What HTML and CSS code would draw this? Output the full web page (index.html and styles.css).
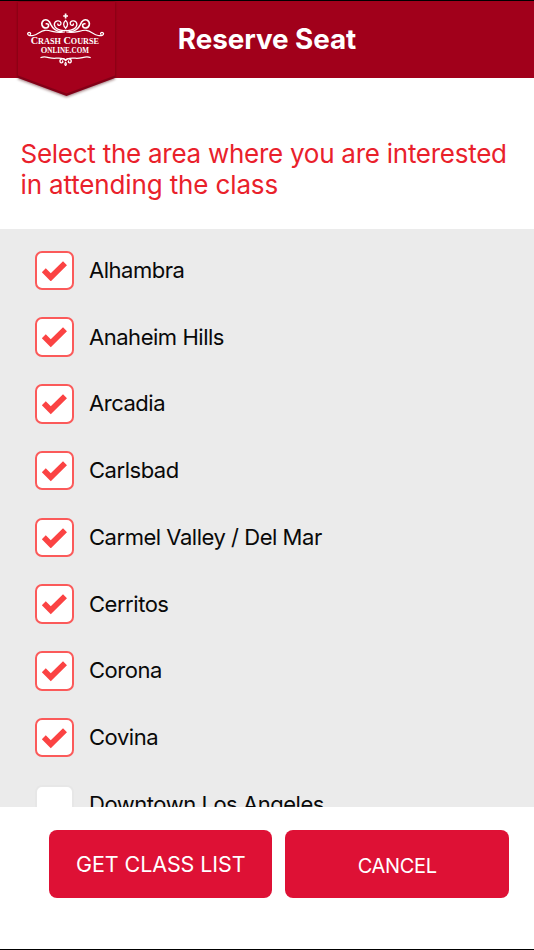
FILE: index.html
```html
<!DOCTYPE html>
<html lang="en">
<head>
<meta charset="utf-8">
<title>Reserve Seat</title>
<link rel="stylesheet" href="styles.css">
</head>
<body>
<svg class="defs" aria-hidden="true">
  <symbol id="check" viewBox="0 0 26 20"><path d="M0.8 10.8 4.6 7 9.4 11.8 21.2 0.2 25 4 9.4 19.6Z"/></symbol>
</svg>
<div class="app">
  <header class="header">
    <svg class="logo" viewBox="0 0 134 110">
      <defs>
        <filter id="shadow" x="-20%" y="-20%" width="140%" height="140%"><feGaussianBlur stdDeviation="1.8"/></filter>
        <g id="scroll" fill="none" stroke="#fff" stroke-linecap="round">
          <path stroke-width="1.300" d="M65.300 30.500C59.500 31 54.500 28.500 54.300 24.500C54.300 20.500 60.300 19.500 61 23C61.200 26 57.600 26 57.800 24"/>
          <path stroke-width="1.600" d="M62 31.500C55 32 52.500 28 50.800 24.500C49.500 20.500 46.500 18.800 43.700 20.300C40.500 22.500 41.500 28 46 28C49.500 27.500 49.300 23.200 46.300 23.800"/>
          <path stroke-width="1.200" d="M64.500 32C56 34 51 29.800 45 30.300C40 30.800 38 34.500 33 35.500C29.500 36.300 26.500 34.500 28 33C29.500 31.600 31.500 33.200 30.300 34.300"/>
          <path stroke-width="1.300" d="M65.600 20.500C63 22.500 63 26 65.600 28"/>
          <path stroke-width="1.300" d="M41 57.500C46 55.500 50 59 56 58.200C61 57.800 64.500 58 65.500 60.500"/>
          <path stroke-width="1.300" d="M65.500 60C63.500 57.500 59.500 59 60 61.500C60.500 64 64 62.500 62.500 61M65.500 62.500C64.500 64 65 65 65.500 65.300"/>
        </g>
      </defs>
      <path d="M18 2H115V79L66.500 97 18 79Z" fill="#430008" opacity=".55" filter="url(#shadow)"/>
      <path d="M18 2H115V78L66.500 96 18 78Z" fill="#830017"/>
      <path d="M18 2H115V75.500L66.500 93.500 18 75.500Z" fill="#a5001c"/>
      <use href="#scroll"/>
      <use href="#scroll" transform="translate(131.200 0) scale(-1 1)"/>
      <path d="M65.600 13.500V18.500M63.200 16H68" stroke="#fff" stroke-width="1.700"/>
      <g class="logo-text">
        <text x="30.700" y="44.300" font-size="11" textLength="68.300" lengthAdjust="spacingAndGlyphs">C<tspan font-size="8.800">RASH</tspan> C<tspan font-size="8.800">OURSE</tspan></text>
        <text x="40.700" y="53.200" font-size="9" textLength="48.300" lengthAdjust="spacingAndGlyphs">O<tspan font-size="7.600">NLINE.COM</tspan></text>
      </g>
    </svg>
    <h1 class="title">Reserve Seat</h1>
  </header>
  <p class="prompt">Select the area where you are interested<br><span class="second">in attending the class</span></p>
  <ul class="areas">
    <li class="area"><span class="box on"><svg><use href="#check"/></svg></span><span class="name">Alhambra</span></li>
    <li class="area"><span class="box on"><svg><use href="#check"/></svg></span><span class="name">Anaheim Hills</span></li>
    <li class="area"><span class="box on"><svg><use href="#check"/></svg></span><span class="name">Arcadia</span></li>
    <li class="area"><span class="box on"><svg><use href="#check"/></svg></span><span class="name">Carlsbad</span></li>
    <li class="area"><span class="box on"><svg><use href="#check"/></svg></span><span class="name">Carmel Valley / Del Mar</span></li>
    <li class="area"><span class="box on"><svg><use href="#check"/></svg></span><span class="name">Cerritos</span></li>
    <li class="area"><span class="box on"><svg><use href="#check"/></svg></span><span class="name">Corona</span></li>
    <li class="area"><span class="box on"><svg><use href="#check"/></svg></span><span class="name">Covina</span></li>
    <li class="area"><span class="box"></span><span class="name">Downtown Los Angeles</span></li>
  </ul>
  <footer class="actions">
    <button class="btn submit">GET CLASS LIST</button>
    <button class="btn cancel">CANCEL</button>
  </footer>
</div>
</body>
</html>
```
FILE: styles.css
```css
* { box-sizing: border-box; }
body { margin: 0; font-family: Inter, "Liberation Sans", sans-serif; background: #fff; }
.defs { display: none; }
.app {
  display: flex;
  flex-direction: column;
  height: 950px;
  overflow: hidden;
  border-top: 1px solid #000;
  border-bottom: 1px solid #000;
}
.header {
  position: relative;
  flex: none;
  height: 76.500px;
  background: #a1001b;
}
.logo { position: absolute; left: 0; top: -1px; width: 134px; height: 110px; }
.logo-text { fill: #fff; font-family: "Liberation Serif", serif; font-weight: 700; }
.title {
  margin: 0;
  text-align: center;
  color: #fff;
  font-size: 27.800px;
  line-height: 77px;
  font-weight: 700;
  letter-spacing: -0.050px;
}
.prompt {
  flex: none;
  height: 151.800px;
  margin: 0;
  padding: 60px 0 0 20.500px;
  color: #e9212b;
  font-size: 26px;
  line-height: 31.700px;
  letter-spacing: -0.260px;
  font-feature-settings: "liga" 0, "calt" 0, "dlig" 0;
  white-space: nowrap;
}
.second { letter-spacing: -0.140px; }
.areas {
  flex: none;
  height: 577.700px;
  margin: 0;
  padding: 7.800px 0 0 34.500px;
  list-style: none;
  overflow: hidden;
  background: #ebebeb;
}
.area { display: flex; align-items: center; gap: 15px; height: 66.750px; }
.box {
  display: flex;
  align-items: center;
  justify-content: center;
  flex: none;
  width: 39.500px;
  height: 39.500px;
  border: 2px solid #e7e7e7;
  border-radius: 7px;
  background: #fff;
}
.on { border: 2px solid #fb5a5a; padding: 1px 0 0 1px; }
.box svg { width: 27px; height: 20.800px; fill: #fb4343; }
.name {
  padding-bottom: 1px;
  color: #090909;
  font-size: 22px;
  line-height: 30px;
  letter-spacing: -0.470px;
  white-space: nowrap;
}
.actions { display: flex; gap: 13px; padding: 23.500px 0 0 48.500px; }
.btn {
  width: 223.500px;
  height: 67.500px;
  padding: 0;
  border: 0;
  border-radius: 8px;
  background: #de1135;
  color: #fff;
  font: 400 21.500px/67px Inter, sans-serif;
}
.submit { padding-left: 1px; letter-spacing: -0.100px; }
.cancel { padding: 3px 0 0 1px; font-size: 20px; letter-spacing: -0.300px; }
```
